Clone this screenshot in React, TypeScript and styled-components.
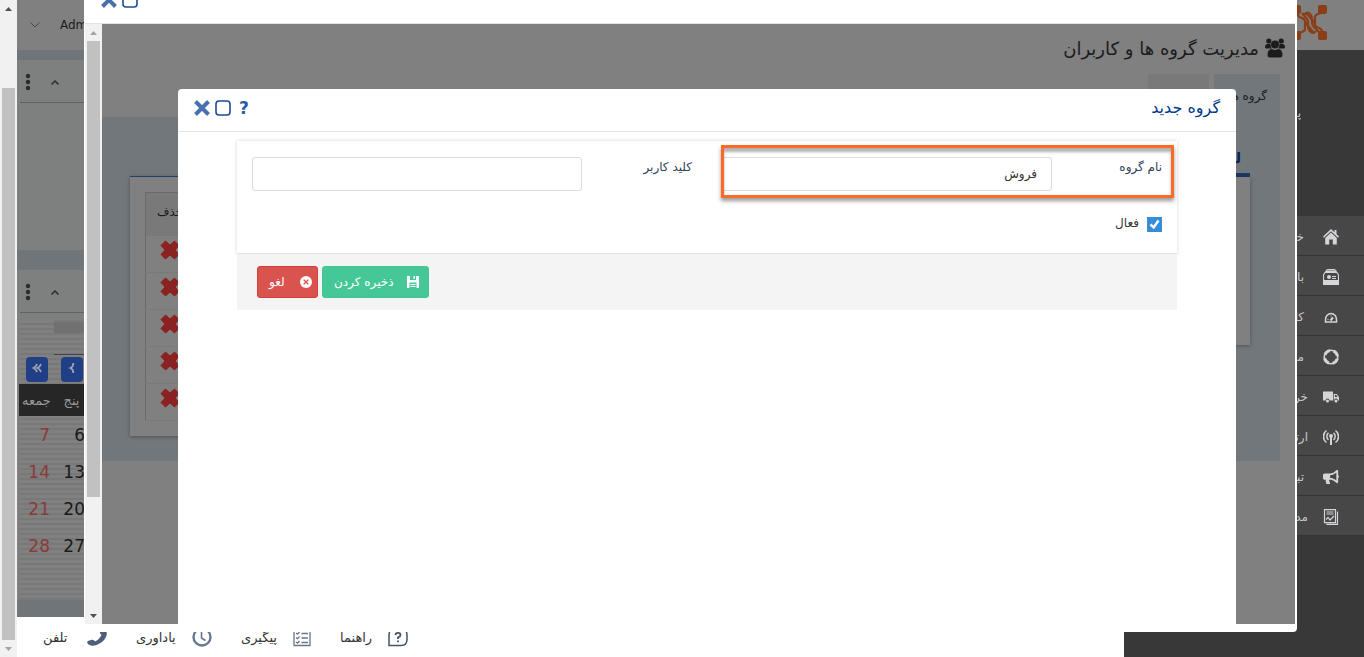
import React from 'react';
import styled, { createGlobalStyle } from 'styled-components';
import { FaBullhorn } from 'react-icons/fa';

const GlobalStyle = createGlobalStyle`
  *, *::before, *::after { box-sizing: border-box; }
  html, body { margin: 0; padding: 0; }
  body {
    background: #383838;
    color: #333;
    font-family: "DejaVu Sans", sans-serif;
    font-size: 12px;
    overflow: hidden;
  }
  button, input { font-family: inherit; }
`;

/* ---------- Page shell ---------- */

const Page = styled.div`
  position: relative;
  display: flex;
  height: 100vh;
  overflow: hidden;
`;

const Track = styled.div`
  display: flex;
  flex: none;
  flex-direction: column;
  align-items: center;
  width: 17px;
  background: #f1f1f1;
`;

const TrackEnd = styled.div`
  display: flex;
  flex: none;
  align-items: center;
  justify-content: center;
  height: 17px;
`;

const Thumb = styled.div<{ $start: number; $size: number }>`
  width: 13px;
  margin-top: ${(p) => p.$start}px;
  margin-bottom: auto;
  flex: 0 1 ${(p) => p.$size}%;
  background: #c1c1c1;
`;

const Arrow = styled.svg.attrs({ width: 7, height: 4, viewBox: '0 0 7 4' })<{ $muted?: boolean }>`
  display: block;
  fill: ${(p) => (p.$muted ? '#a3a3a3' : '#505050')};
`;

const Main = styled.main`
  display: flex;
  flex: 1;
  flex-direction: column;
  min-width: 0;
  background: #707579;
`;

const TopBar = styled.header`
  display: flex;
  flex: none;
  align-items: center;
  gap: 20px;
  height: 50px;
  padding: 0 13px;
  background: #808080;
  color: #1c1c1c;
`;

const Widgets = styled.div`
  display: flex;
  flex: 1;
  flex-direction: column;
  gap: 20px;
  min-height: 0;
  padding: 10px 0 17px;
  background: #70757a;
`;

const Widget = styled.section<{ $grow?: boolean }>`
  flex: ${(p) => (p.$grow ? '1 1 0' : '0 0 190px')};
  min-height: 0;
  overflow: hidden;
  background: #7d807e;
`;

const WidgetHead = styled.div`
  display: flex;
  align-items: center;
  gap: 20px;
  height: 43px;
  margin-left: 3px;
  padding: 2px 0 0 5px;
  border-bottom: 1px solid #606362;
`;

const GhostButton = styled.button`
  display: flex;
  padding: 0;
  border: 0;
  background: none;
  color: #2b2b2b;
`;

const Calendar = styled.div`
  height: 100%;
  margin: 7px 0 0 2px;
  background: repeating-linear-gradient(#7f807f 0 3px, #777877 3px 5px);
`;

const CalendarTitle = styled.div`
  height: 35px;
  margin-left: 35px;
  border-top: 2px solid #7a7a7a;
  border-bottom: 1px solid #444;
  background: linear-gradient(#717171 0 11px, transparent 11px);
`;

const CalendarNav = styled.div`
  display: flex;
  gap: 13px;
  padding: 2px 7px;
`;

const NavButton = styled.button`
  display: flex;
  align-items: center;
  justify-content: center;
  width: 22px;
  height: 25px;
  padding: 0 0 4px;
  border: 0;
  border-radius: 4px;
  background: #213f86;
  color: #a0a5b0;
`;

const Days = styled.table`
  width: 70px;
  border-collapse: collapse;
  table-layout: fixed;
  th {
    height: 32px;
    padding: 0;
    background: #262626;
    color: #999;
    font-size: 13px;
    font-weight: 400;
  }
  td {
    height: 37px;
    padding: 0 4px 0 0;
    color: #1a1a1a;
    font-size: 17px;
    text-align: right;
  }
  td:first-child { color: #8a3a3a; }
`;

const BottomBar = styled.nav`
  display: flex;
  flex: none;
  gap: 29px;
  height: 40px;
  padding: 0 26px;
  background: #fff;
`;

const BottomLink = styled.a<{ $width: number }>`
  display: flex;
  align-items: center;
  justify-content: space-between;
  width: ${(p) => p.$width}px;
  color: #333;
  font-size: 13px;
  text-decoration: none;
  white-space: nowrap;
`;

/* ---------- Sidebar ---------- */

const Sidebar = styled.aside`
  flex: none;
  width: 240px;
  background: #383838;
  direction: rtl;
`;

const Brand = styled.div`
  display: flex;
  align-items: center;
  height: 50px;
  padding: 0 36px 4px 0;
  background: #808080;
`;

const UserName = styled.div`
  height: 166px;
  padding: 56px 63px 0 0;
  color: #c8c8c8;
  font-size: 12px;
`;

const Menu = styled.nav`
  display: flex;
  flex-direction: column;
`;

const MenuLink = styled.a<{ $wide?: boolean }>`
  display: flex;
  align-items: center;
  gap: ${(p) => (p.$wide ? 15 : 19)}px;
  height: 40px;
  padding: 2px 25px 0 0;
  border-bottom: 1px solid #33343a;
  background: #474747;
  color: #c8c8c8;
  font-size: 12px;
  text-decoration: none;
  svg { flex: none; color: #d3d5d9; }
`;

/* ---------- Windows ---------- */

const OuterWindow = styled.section`
  position: absolute;
  top: -19px;
  right: 67px;
  bottom: 25px;
  left: 84px;
  display: flex;
  flex-direction: column;
  padding: 0 2px 8px 1px;
  border-radius: 4px;
  background: #fff;
`;

const WindowHead = styled.header`
  display: flex;
  flex: none;
  align-items: center;
  justify-content: space-between;
  height: 43px;
  padding: 0 16px 5px;
  border-bottom: 1px solid #e3e3e3;
`;

const WindowTools = styled.div`
  display: flex;
  align-items: center;
  gap: 5px;
`;

const ToolButton = styled.button`
  display: flex;
  align-items: center;
  justify-content: center;
  width: 16px;
  height: 18px;
  padding: 0;
  border: 0;
  background: none;
  color: #2a5ba6;
  font-size: 17px;
  font-weight: 700;
`;

const WindowTitle = styled.h2`
  margin: 0;
  color: #003a8c;
  font-size: 16px;
  font-weight: 400;
`;

const Frame = styled.div`
  position: relative;
  display: flex;
  flex: 1;
  min-height: 0;
`;

const Content = styled.div`
  position: relative;
  flex: 1;
  min-width: 0;
  overflow: hidden;
  background: #808080;
  color: #1c1c1c;
  direction: rtl;
`;

const PageTitle = styled.h1`
  display: flex;
  align-items: center;
  gap: 6px;
  height: 50px;
  margin: 0;
  padding: 0 10px 2px;
  font-size: 18px;
  font-weight: 400;
`;

const Tabs = styled.div`
  display: flex;
  gap: 5px;
  padding-right: 15px;
`;

const Tab = styled.button<{ $active?: boolean }>`
  width: ${(p) => (p.$active ? 66 : 61)}px;
  height: 43px;
  padding: 0 13px;
  border: 0;
  background: ${(p) => (p.$active ? '#72777b' : '#797979')};
  color: #1c1c1c;
  font-size: 12px;
  text-align: right;
  white-space: nowrap;
`;

const TabPanel = styled.div`
  display: flex;
  align-items: flex-start;
  justify-content: space-between;
  height: 344px;
  margin-right: 15px;
  padding: 30px 30px 0 28px;
  background: #72777b;
`;

const GroupTree = styled.div`
  width: 300px;
`;

const TreeTitle = styled.h3`
  height: 30px;
  margin: 0;
  padding: 3px 9px 0;
  border-bottom: 4px solid #1b3961;
  color: #00275c;
  font-size: 14px;
  font-weight: 700;
`;

const TreeBody = styled.div`
  height: 168px;
  background: #808080;
  box-shadow: 0 1px 4px rgba(0, 0, 0, 0.3);
`;

const ListPanel = styled.div`
  width: 700px;
  margin-top: 29px;
  padding: 15px;
  border-top: 1px solid #1d4369;
  background: #808080;
  box-shadow: 0 1px 4px rgba(0, 0, 0, 0.3);
`;

const GroupTable = styled.table`
  width: 100%;
  border: 1px solid #686b6e;
  border-collapse: collapse;
  th {
    height: 43px;
    padding: 0 11px 4px;
    background: #797979;
    font-size: 12px;
    font-weight: 400;
    text-align: left;
  }
  td {
    height: 37px;
    padding: 0 14px 8px;
    border-bottom: 1px solid #797979;
  }
  svg { display: block; margin-right: auto; }
`;

const InnerWindow = styled.section`
  position: absolute;
  top: 65px;
  right: 59px;
  bottom: 0;
  left: 93px;
  display: flex;
  flex-direction: column;
  border-radius: 4px 4px 0 0;
  background: #fff;
`;

const Form = styled.form`
  margin: 9px 59px;
  direction: rtl;
`;

const Card = styled.div`
  display: grid;
  grid-template-columns: 1fr 1fr;
  align-content: start;
  row-gap: 25px;
  height: 113px;
  padding-top: 16px;
  border-bottom: 1px solid #e1e1e1;
  box-shadow: 0 0 4px rgba(0, 0, 0, 0.16);
`;

const Field = styled.div`
  position: relative;
  display: grid;
  grid-template-columns: 1fr 3fr;
  height: 34px;
  padding: 0 15px;
`;

const FieldLabel = styled.label`
  padding-top: 3px;
  color: #2f4257;
  font-size: 12px;
`;

const TextInput = styled.input`
  width: 100%;
  height: 34px;
  padding: 0 14px;
  border: 1px solid #dcdcdc;
  border-radius: 3px;
  outline: 0;
  background: #fff;
  color: #333;
  font-size: 12px;
`;

const Highlight = styled.div`
  position: absolute;
  top: -12px;
  right: 3px;
  left: 14px;
  height: 53px;
  border: 3px solid #ff6a26;
  box-shadow: 0 3px 4px rgba(0, 0, 0, 0.4), inset 0 4px 3px rgba(0, 0, 0, 0.3);
  pointer-events: none;
`;

const CheckRow = styled.label`
  display: flex;
  gap: 8px;
  align-items: flex-start;
  padding: 0 15px;
  color: #333;
  font-size: 12px;
`;

const CheckBox = styled.input`
  appearance: none;
  width: 15px;
  height: 15px;
  margin: 1px 0 0;
  background: #368ddb url("data:image/svg+xml,%3Csvg xmlns='http://www.w3.org/2000/svg' viewBox='0 0 15 15'%3E%3Cpath d='M3.5 7.5l3.2 3 4.8-7' fill='none' stroke='white' stroke-width='2.4'/%3E%3C/svg%3E");
`;

const Actions = styled.div`
  display: flex;
  flex-direction: row-reverse;
  justify-content: flex-end;
  gap: 4px;
  padding: 12px 20px;
  background: #f4f4f4;
  direction: ltr;
`;

const ActionButton = styled.button<{ $kind: 'save' | 'cancel' }>`
  display: flex;
  align-items: center;
  justify-content: space-between;
  width: ${(p) => (p.$kind === 'save' ? 107 : 61)}px;
  height: 32px;
  padding: 0 ${(p) => (p.$kind === 'save' ? 9 : 5)}px 0 11px;
  border: 1px solid ${(p) => (p.$kind === 'save' ? '#43c494' : '#d43f3a')};
  border-radius: 3px;
  background: ${(p) => (p.$kind === 'save' ? '#46c797' : '#d9534f')};
  color: #fff;
  font-size: 12px;
  white-space: nowrap;
`;

/* ---------- Icons ---------- */

const CloseIcon = () => (
  <svg width="16" height="16" viewBox="0 0 16 16" fill="none" stroke="#4a71ae" strokeWidth="4">
    <path d="M1.500 1.500l13 13M14.500 1.500l-13 13" />
  </svg>
);

const MaximizeIcon = () => (
  <svg width="16" height="16" viewBox="0 0 16 16" fill="none" stroke="#1b4c96" strokeWidth="1.600">
    <rect x="1" y="1" width="14" height="14" rx="3" />
  </svg>
);

const DeleteIcon = () => (
  <svg width="20" height="20" viewBox="0 0 20 20" fill="#8a2222" stroke="#8a2222" strokeLinejoin="round">
    <path d="M5.500 1L10 5l4.500-4L19 5.500 15 10l4 4.500-4.500 4.500L10 15l-4.500 4L1 14.500 5 10 1 5.500z" />
  </svg>
);

const LogoMark = () => (
  <svg width="36" height="36" viewBox="0 0 36 36" fill="none" stroke="#8a3d16" strokeWidth="2.200">
    <g fill="#8a3d16" stroke="none">
      <rect x="0" y="0" width="9" height="9" rx="2" />
      <rect x="26" y="0" width="9" height="9" rx="2" />
      <rect x="0" y="26" width="9" height="9" rx="2" />
      <rect x="26" y="26" width="9" height="9" rx="2" />
    </g>
    <path d="M5 8q1 4 5 5 3 1 3 4v7q0 2-3 3l-4 1" />
    <path d="M30 8q-1 0-4 1-3 1-3 3v7q0 3 4 4 3 1 3 4" />
    <path d="M12 10q3-4 6-1 2 2 2 5v4q0 2 2 4l5 5" />
    <path d="M10 8l4 5q2 2 2 4v4q0 4 3 6t5-1" />
    <path d="M14 8l9 10M13 17l9 11" />
  </svg>
);

const UsersIcon = () => (
  <svg width="20" height="20" viewBox="0 0 20 20" fill="currentColor">
    <circle cx="3.800" cy="3" r="2.600" />
    <circle cx="16.200" cy="3" r="2.600" />
    <path d="M0 9.500Q0 6 2.500 6h3q0 3 1.500 4.500H1.500Q0 10.500 0 9.500zM20 9.500Q20 6 17.500 6h-3q0 3-1.500 4.500h5.500q1.500 0 1.500-1z" />
    <circle cx="10" cy="6.500" r="4" />
    <path d="M2.500 17q0-6 4.500-6 3 2 6 0 4.500 0 4.500 6 0 2.500-2.500 2.500H5q-2.500 0-2.500-2.500z" />
  </svg>
);

const HomeIcon = () => (
  <svg width="16" height="16" viewBox="0 0 16 16" fill="currentColor">
    <path d="M8 0L0 7.500l1 1.200 7-6.500 7 6.500 1-1.200-2.500-2.400V1h-2v2.200z" />
    <path d="M8 3.500L2.200 9v6.500h4v-5h3.600v5h4V9z" />
  </svg>
);

const TruckIcon = () => (
  <svg width="16" height="12" viewBox="0 0 16 12" fill="currentColor">
    <path d="M0 .5h10v9H6.500a2 2 0 0 0-4 0H0z" />
    <path fillRule="evenodd" d="M10.700 3h3L16 6v3.500h-1a2 2 0 0 0-4 0h-.3zM12 4v2h2.700l-1.500-2z" />
    <circle cx="4.500" cy="10" r="1.500" />
    <circle cx="13" cy="10" r="1.500" />
  </svg>
);

const CardBoxIcon = () => (
  <svg width="16" height="16" viewBox="0 0 16 16">
    <g fill="none" stroke="currentColor">
      <path d="M2.500 2.500L4 .5h8l1.500 2z" fill="#999" />
      <path d="M.5 11V6L2 3.500h12L15.500 6v5" strokeWidth="1.200" />
      <path d="M9 7.500h4M9 9.500h4" />
    </g>
    <circle cx="6" cy="8" r="2" fill="currentColor" />
    <path d="M0 11h16v5H0z" fill="currentColor" />
  </svg>
);

const GaugeIcon = () => (
  <svg width="16" height="16" viewBox="0 0 16 16" fill="none" stroke="currentColor" strokeWidth="1.500">
    <path d="M2.500 13V10.500a5.500 6 0 0 1 11 0V13z" />
    <path d="M7.500 11.500l2.500-3" strokeWidth="2" />
    <path d="M5 10v1M8 6.500v1" strokeWidth="1" />
  </svg>
);

const RingIcon = () => (
  <svg width="16" height="16" viewBox="0 0 16 16" fill="none" stroke="currentColor">
    <circle cx="8" cy="8" r="6.800" strokeWidth="1.600" />
    <circle cx="8" cy="8" r="6.500" strokeWidth="3" strokeDasharray="6.200 4" strokeDashoffset="-2" />
  </svg>
);

const AntennaIcon = () => (
  <svg width="16" height="16" viewBox="0 0 16 16" fill="none" stroke="currentColor" strokeWidth="1.500">
    <path d="M3.500 1.500a7.500 7.500 0 0 0 0 12M12.500 1.500a7.500 7.500 0 0 1 0 12M5.500 3.800a4.500 4.500 0 0 0 0 7M10.500 3.800a4.500 4.500 0 0 1 0 7" />
    <path d="M8 7v9" strokeWidth="2" />
    <circle cx="8" cy="7" r="2" fill="currentColor" stroke="none" />
  </svg>
);

const ReportIcon = () => (
  <svg width="16" height="16" viewBox="0 0 16 16" fill="none" stroke="currentColor" strokeWidth="1.200">
    <path d="M1.500.6h11v13h-11zM3.500 15.400h11v-13" />
    <path d="M3.500 3h7M3.500 5h7M3 10.500l2-2 2 2.500 4-4" />
  </svg>
);

const PhoneIcon = () => (
  <svg width="20" height="20" viewBox="0 0 20 20" fill="#4d6079">
    <path d="M14.500 2.500q2-1 4 .5 2 2 1 5.500Q18 13 13.500 16q-5 3.500-9.500 2.500-3-.7-3.800-2.500-.4-1.500 1.300-2.200l3.500-1q1.500-.3 2 .8.700 1 2 .3Q12.500 12 14 9q.7-1.200-.2-2-1.300-.8-.8-2z" />
  </svg>
);

const ClockIcon = () => (
  <svg width="20" height="20" viewBox="0 0 20 20" fill="none" stroke="#66778e">
    <circle cx="10" cy="10" r="8.500" strokeWidth="2.400" />
    <path d="M9.500 4.500V11l4 2.500" strokeWidth="1.600" />
  </svg>
);

const ChecklistIcon = () => (
  <svg width="18" height="20" viewBox="0 0 18 20" fill="none" stroke="#66778e" strokeWidth="1.300">
    <path d="M1 2h16v16.500H1z" />
    <path d="M3 6l1.500 1.200L6.500 5M3 10.500l1.500 1.200 2-2.200M3 15l1.500 1.200 2-2.200M8.500 6.500H15M8.500 11H15M8.500 15.500H15" />
  </svg>
);

const HelpIcon = () => (
  <svg width="20" height="20" viewBox="0 0 20 20" fill="none" stroke="#42536b" strokeWidth="1.500">
    <path d="M1 18.500V8q0-6 6-6h6q6 0 6 6v4.500q0 6-6 6z" />
    <path d="M7.500 8q0-2.200 2.500-2.200t2.500 2.200q0 1.500-2.500 2.500v1.500M10 13.500v1.700" strokeWidth="1.800" />
  </svg>
);

const ChevronIcon = ({ double }: { double?: boolean }) => (
  <svg width="10" height="10" viewBox="0 0 10 10" fill="none" stroke="currentColor" strokeWidth="1.800">
    <path d={double ? 'M5 1Q4 4 1.500 5 4 6 5 9M9 1Q8 4 5.500 5 8 6 9 9' : 'M6.500 0Q6 4 3.500 5 6 6 6.500 10'} />
  </svg>
);

const CancelIcon = () => (
  <svg width="12" height="12" viewBox="0 0 12 12">
    <circle cx="6" cy="6" r="6" fill="#fff" />
    <path d="M3.700 3.700l4.600 4.600M8.300 3.700L3.700 8.300" stroke="#d9534f" strokeWidth="1.300" />
  </svg>
);

const DiskIcon = () => (
  <svg width="12" height="12" viewBox="0 0 12 12">
    <path d="M0 0h12v12H0z" fill="#fff" />
    <path d="M3 0h6v4H3zM2.500 6.500h7V12h-7z" fill="#46c797" />
    <path d="M6.500 0h1.500v3H6.500zM3.500 8h5v1h-5zM3.500 10h5v1h-5z" fill="#fff" />
  </svg>
);

/* ---------- Data ---------- */

const menu = [
  { text: 'خانه', icon: <HomeIcon /> },
  { text: 'بازاریابی', icon: <CardBoxIcon /> },
  { text: 'کالا', icon: <GaugeIcon /> },
  { text: 'مشتریان', icon: <RingIcon /> },
  { text: 'خرید', icon: <TruckIcon />, wide: true },
  { text: 'ارتباطات', icon: <AntennaIcon />, wide: true },
  { text: 'تبلیغات', icon: <FaBullhorn size={16} /> },
  { text: 'مدیریت', icon: <ReportIcon />, wide: true },
];

const weeks = [[7, 6], [14, 13], [21, 20], [28, 27]];

const shortcuts = [
  { text: 'تلفن', width: 64, icon: <PhoneIcon /> },
  { text: 'یاداوری', width: 76, icon: <ClockIcon /> },
  { text: 'پیگیری', width: 70, icon: <ChecklistIcon /> },
  { text: 'راهنما', width: 68, icon: <HelpIcon /> },
];

const WidgetTools = () => (
  <WidgetHead>
    <GhostButton type="button" aria-label="گزینه‌ها">
      <svg width="6" height="18" viewBox="0 0 6 18" fill="currentColor">
        <circle cx="3" cy="3" r="2.200" />
        <circle cx="3" cy="9" r="2.200" />
        <circle cx="3" cy="15" r="2.200" />
      </svg>
    </GhostButton>
    <GhostButton type="button" aria-label="بستن بخش">
      <svg width="8" height="5" viewBox="0 0 8 5" fill="none" stroke="currentColor" strokeWidth="1.500">
        <path d="M.5 4.500L4 1l3.500 3.500" />
      </svg>
    </GhostButton>
  </WidgetHead>
);

const ScrollTrack = ({ start, size, atTop }: { start: number; size: number; atTop?: boolean }) => (
  <Track>
    <TrackEnd>
      <Arrow $muted={atTop}><path d="M0 4l3.500-4L7 4z" /></Arrow>
    </TrackEnd>
    <Thumb $start={start} $size={size} />
    <TrackEnd>
      <Arrow $muted={!atTop}><path d="M0 0l3.500 4L7 0z" /></Arrow>
    </TrackEnd>
  </Track>
);

export default function App() {
  return (
    <>
      <GlobalStyle />
      <Page>
        <ScrollTrack start={71} size={100} />
        <Main>
          <TopBar>
            <svg width="10" height="6" viewBox="0 0 10 6" fill="none" stroke="#44484c">
              <path d="M.5.500L5 5 9.500.500" />
            </svg>
            <span>Admin</span>
          </TopBar>
          <Widgets>
            <Widget><WidgetTools /></Widget>
            <Widget $grow>
              <WidgetTools />
              <Calendar>
                <CalendarTitle />
                <CalendarNav>
                  <NavButton type="button" aria-label="سال قبل"><ChevronIcon double /></NavButton>
                  <NavButton type="button" aria-label="ماه قبل"><ChevronIcon /></NavButton>
                </CalendarNav>
                <Days>
                  <thead>
                    <tr><th>جمعه</th><th>پنج</th></tr>
                  </thead>
                  <tbody>
                    {weeks.map((week) => (
                      <tr key={week[0]}>{week.map((day) => <td key={day}>{day}</td>)}</tr>
                    ))}
                  </tbody>
                </Days>
              </Calendar>
            </Widget>
          </Widgets>
          <BottomBar>
            {shortcuts.map((item) => (
              <BottomLink key={item.text} href="#" $width={item.width}>
                <span>{item.text}</span>
                {item.icon}
              </BottomLink>
            ))}
          </BottomBar>
        </Main>
        <Sidebar>
          <Brand><LogoMark /></Brand>
          <UserName>پنل</UserName>
          <Menu>
            {menu.map((item) => (
              <MenuLink key={item.text} href="#" $wide={item.wide}>
                {item.icon}
                <span>{item.text}</span>
              </MenuLink>
            ))}
          </Menu>
        </Sidebar>

        <OuterWindow>
          <WindowHead>
            <WindowTools>
              <ToolButton type="button" aria-label="بستن"><CloseIcon /></ToolButton>
              <ToolButton type="button" aria-label="بزرگ کردن"><MaximizeIcon /></ToolButton>
            </WindowTools>
          </WindowHead>
          <Frame>
            <ScrollTrack start={0} size={76} atTop />
            <Content>
              <PageTitle>
                <UsersIcon />
                مدیریت گروه ها و کاربران
              </PageTitle>
              <Tabs>
                <Tab type="button" $active>گروه ها</Tab>
                <Tab type="button" aria-label="کاربران" />
              </Tabs>
              <TabPanel>
                <GroupTree>
                  <TreeTitle>لیست</TreeTitle>
                  <TreeBody />
                </GroupTree>
                <ListPanel>
                  <GroupTable>
                    <thead><tr><th>حذف</th></tr></thead>
                    <tbody>
                      {[1, 2, 3, 4, 5].map((row) => (
                        <tr key={row}><td><DeleteIcon /></td></tr>
                      ))}
                    </tbody>
                  </GroupTable>
                </ListPanel>
              </TabPanel>
            </Content>

            <InnerWindow>
              <WindowHead>
                <WindowTools>
                  <ToolButton type="button" aria-label="بستن"><CloseIcon /></ToolButton>
                  <ToolButton type="button" aria-label="بزرگ کردن"><MaximizeIcon /></ToolButton>
                  <ToolButton type="button">?</ToolButton>
                </WindowTools>
                <WindowTitle>گروه جدید</WindowTitle>
              </WindowHead>
              <Form>
                <Card>
                  <Field>
                    <FieldLabel htmlFor="group-name">نام گروه</FieldLabel>
                    <TextInput id="group-name" defaultValue="فروش" />
                    <Highlight />
                  </Field>
                  <Field>
                    <FieldLabel htmlFor="user-key">کلید کاربر</FieldLabel>
                    <TextInput id="user-key" />
                  </Field>
                  <CheckRow>
                    <CheckBox type="checkbox" defaultChecked />
                    فعال
                  </CheckRow>
                </Card>
                <Actions>
                  <ActionButton type="button" $kind="save">
                    <span>ذخیره کردن</span>
                    <DiskIcon />
                  </ActionButton>
                  <ActionButton type="button" $kind="cancel">
                    <span>لغو</span>
                    <CancelIcon />
                  </ActionButton>
                </Actions>
              </Form>
            </InnerWindow>
          </Frame>
        </OuterWindow>
      </Page>
    </>
  );
}
